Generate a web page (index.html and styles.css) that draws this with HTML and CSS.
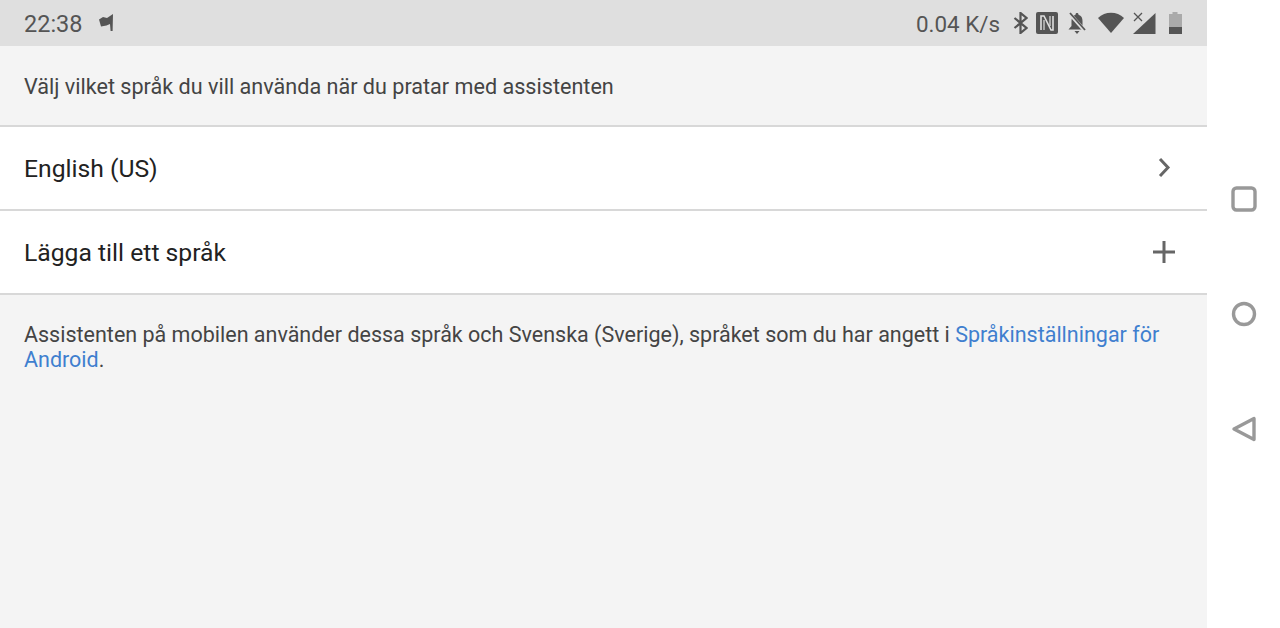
FILE: index.html
```html
<!DOCTYPE html>
<html lang="sv">
<head>
    <meta charset="UTF-8">
    <meta name="viewport" content="width=device-width, initial-scale=1.0">
    <title>Språk</title>
    <link rel="stylesheet" href="styles.css">
</head>
<body>
    <div class="screen">
        <div class="main">
            <div class="status-bar">
                <div class="status-left">
                    <span class="clock">22:38</span>
                    <svg class="flag-icon" width="16" height="18" viewBox="0 0 16 18"><path d="M0 5.500l4-2.500 4 1 6-4-.4 17h-2L11 10l-3.500 1.500-5.500 1z" fill="#555"/></svg>
                </div>
                <div class="status-right">
                    <span class="speed">0.04 K/s</span>
                    <svg class="bt-icon" width="15" height="22" viewBox="0 0 15 22"><path d="M1.500 6l12 10-6 5V1l6 5-12 10" fill="none" stroke="#555" stroke-width="2.200"/></svg>
                    <svg class="nfc-icon" width="22" height="22" viewBox="0 0 22 22"><rect width="22" height="22" rx="2" fill="#555"/><path d="M5 18V4h3l7 14h2V4" fill="none" stroke="#dfdfdf" stroke-width="1.600"/><path d="M8 8v10M14 14V4" fill="none" stroke="#dfdfdf" stroke-width="1.200"/></svg>
                    <svg class="bell-icon" width="20" height="22" viewBox="0 0 20 22"><path d="M10 1c-1 0-1.500.7-1.500 1.700C5.500 3.500 4.500 6 4.500 9v5L1.500 17.500h17L15.500 14V9c0-3-1-5.500-4-6.300C11.500 1.700 11 1 10 1zM7.500 19h5L10 22z" fill="#555"/><path d="M2 1l16 18" stroke="#dfdfdf" stroke-width="3.600"/><path d="M3 1l15 17" stroke="#555" stroke-width="1.800"/></svg>
                    <svg class="wifi-icon" width="26" height="22" viewBox="0 0 26 22"><path d="M0 6C7-1 19-1 26 6L13 21z" fill="#555"/></svg>
                    <svg class="signal-icon" width="23" height="22" viewBox="0 0 23 22"><path d="M22.500 1v21H0z" fill="#555"/><path d="M1 1l8 8M9 1L1 9" stroke="#555" stroke-width="1.300"/></svg>
                    <svg class="battery-icon" width="14" height="22" viewBox="0 0 14 22"><path d="M4.500 0h5v2H14v20H1V2h3.500z" fill="#aaa"/><rect x="1" y="15" width="13" height="7" fill="#555"/></svg>
                </div>
            </div>
            <p class="intro">Välj vilket språk du vill använda när du pratar med assistenten</p>
            <div class="list">
                <div class="list-row">
                    <span>English (US)</span>
                    <svg width="24" height="24" viewBox="0 0 24 24"><path d="M8 3l8 8.500-8 8.500" fill="none" stroke="#666" stroke-width="3"/></svg>
                </div>
                <div class="list-row">
                    <span>Lägga till ett språk</span>
                    <svg width="24" height="24" viewBox="0 0 24 24"><path d="M1 12h22M12 1v22" fill="none" stroke="#666" stroke-width="3"/></svg>
                </div>
            </div>
            <p class="note">Assistenten på mobilen använder dessa språk och Svenska (Sverige), språket som du har angett i <a href="#">Språkinställningar för Android</a>.</p>
        </div>
        <nav class="nav-bar">
            <svg width="26" height="26" viewBox="0 0 26 26"><rect x="2" y="2" width="22" height="22" rx="3.500" fill="none" stroke="#999" stroke-width="3.400"/></svg>
            <svg width="26" height="26" viewBox="0 0 26 26"><circle cx="13" cy="13" r="10.500" fill="none" stroke="#999" stroke-width="3.400"/></svg>
            <svg width="26" height="26" viewBox="0 0 26 26"><path d="M23 2.500v21L3 13z" fill="none" stroke="#999" stroke-width="3.400" stroke-linejoin="round"/></svg>
        </nav>
    </div>
</body>
</html>
```

FILE: styles.css
```css
* {
    box-sizing: border-box;
}
body {
    margin: 0;
    height: 628px;
    overflow: hidden;
    font-family: 'Roboto', sans-serif;
    background: #fff;
    color: #444;
}
.screen {
    display: flex;
    height: 100%;
}
.main {
    width: 1207px;
    background: #f4f4f4;
}
.status-bar {
    display: flex;
    justify-content: space-between;
    align-items: center;
    height: 46px;
    padding: 0 25px 0 24px;
    background: #dfdfdf;
    color: #555;
}
.status-left,
.status-right {
    display: flex;
    align-items: center;
}
.status-left {
    gap: 16px;
}
.clock {
    font-size: 23.500px;
    position: relative;
    top: 1px;
}
.flag-icon {
    margin-left: 0;
}
.status-right svg {
    flex-shrink: 0;
}
.speed {
    font-size: 22.400px;
    position: relative;
    top: 1px;
}
.bt-icon {
    margin-left: 13px;
}
.nfc-icon {
    margin-left: 8px;
}
.bell-icon {
    margin-left: 9px;
}
.wifi-icon {
    margin-left: 11px;
}
.signal-icon {
    margin-left: 9px;
}
.battery-icon {
    margin-left: 12px;
}
.intro {
    margin: 0;
    height: 79px;
    padding-top: 27px;
    font-size: 21.600px;
    line-height: 27px;
}
.intro,
.note {
    padding-left: 24px;
    padding-right: 24px;
}
.list {
    background: #fff;
}
.list-row {
    display: flex;
    justify-content: space-between;
    align-items: center;
    height: 84px;
    padding: 1px 31px 0 24px;
    border-top: 2px solid #d8d8d8;
    font-size: 24.700px;
    color: #222;
}
.list-row svg {
    margin-top: -2px;
}
.note {
    margin: 0;
    border-top: 2px solid #d8d8d8;
    padding-top: 27px;
    font-size: 21.500px;
    line-height: 25px;
}
.note a {
    color: #3f7fcf;
    text-decoration: none;
}
.nav-bar {
    flex: 1;
    display: flex;
    flex-direction: column;
    align-items: center;
    gap: 89px;
    padding-top: 186px;
}
```
